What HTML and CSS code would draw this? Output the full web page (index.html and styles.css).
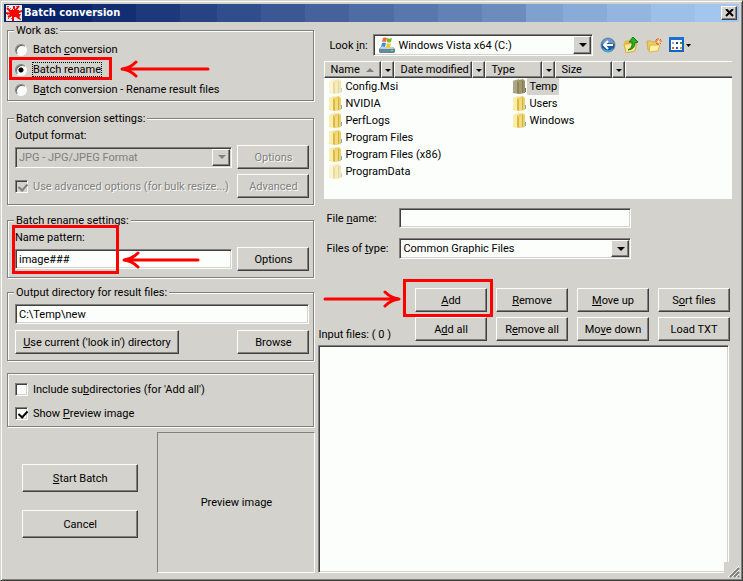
FILE: index.html
```
<!DOCTYPE html>
<html lang="en">
<head>
  <meta charset="utf-8">
  <title>Batch conversion</title>
  <link rel="stylesheet" href="styles.css">
</head>
<body>
<svg class="defs">
  <symbol id="folder" viewBox="0 0 14 16">
    <path d="M0 2l6-2v15l-6-1z" fill="#f4e28c"/>
    <path d="M6 1l4-1 2 2v12l-6 1z" fill="#ecd068"/>
    <path d="M0 2l4-1v13l-4-1z" fill="#f9eeae"/>
    <path d="M4 2l2 2v11l-2-1z" fill="#dcb846"/>
    <path d="M6 4l3-2v12l-3 1z" fill="#f2db7c"/>
    <path d="M9 2h1v12H9z" fill="#d6b03e"/>
    <path d="M12 9h1v4h-1z" fill="#6fb0d8"/>
  </symbol>
</svg>

<div class="window">
  <header class="titlebar">
    <svg class="logo" viewBox="0 0 16 16">
      <path d="M0 0h16v16H0z" fill="#ece8e6"/>
      <path d="M1 1h2v1H1zM4 3h1v1H4zM10 1h2v1h-2zM14 6h1v1h-1zM1 8h1v2H1zM13 9h2v1h-2zM5 13h1v1H5zM14 14h1v1h-1zM2 13h1v1H2z" fill="#7a6a68"/>
      <path d="M5 7L1 3M8 6V1M9 6l4-5M10 8l6-2M6 9L0 8M6 10l-4 2M7 10v6M9 10l5 4M10 9l4 2" stroke="#f00000" stroke-width="2" fill="none"/>
      <path d="M4 5h2V4h5v1h2v5h-2v2H6v-1H4z" fill="#f80000"/>
      <path d="M6 2h1v1H6zM7 4h1v1H7z" fill="#fff"/>
    </svg>
    <h1>Batch conversion</h1>
    <button class="close" aria-label="Close">
      <svg viewBox="0 0 9 8"><path d="M1 0l7 7M8 0L1 7" stroke="#000" stroke-width="2"/></svg>
    </button>
  </header>

  <main>
    <section class="left">
      <fieldset class="work">
        <legend>Work as:</legend>
        <label><input type="radio" name="work"><span>Batch <u>c</u>onversion</span></label>
        <label class="picked"><input type="radio" name="work" checked><span class="focus">Batch rename</span>
          <i class="mark mark-rename"></i>
          <svg class="arrow arrow-rename"><path d="M88 9H2M16 2Q10 8 2 9q8 1 14 7"/></svg>
        </label>
        <label><input type="radio" name="work"><span>B<u>a</u>tch conversion - Rename result files</span></label>
      </fieldset>

      <fieldset class="convert">
        <legend>Batch conversion settings:</legend>
        <label class="caption" for="format">Output format:</label>
        <div class="row">
          <div class="combo off grow">
            <select id="format" disabled><option>JPG - JPG/JPEG Format</option></select>
          </div>
          <button class="btn" disabled>Options</button>
        </div>
        <div class="row">
          <label class="grow off"><input type="checkbox" checked disabled><span>Use advanced options (for bulk resize...)</span></label>
          <button class="btn" disabled>Advanced</button>
        </div>
      </fieldset>

      <fieldset class="rename">
        <legend>Batch rename settings:</legend>
        <label class="caption" for="pattern">Name pattern:</label>
        <div class="row">
          <input class="field grow" id="pattern" type="text" value="image###">
          <button class="btn">Options</button>
        </div>
        <i class="mark mark-pattern"></i>
        <svg class="arrow arrow-pattern"><path d="M76 9H2M16 2Q10 8 2 9q8 1 14 7"/></svg>
      </fieldset>

      <fieldset class="output">
        <legend><label for="outdir">Output directory for result files:</label></legend>
        <input class="field" id="outdir" type="text" value="C:\Temp\new">
        <div class="row spread">
          <button class="btn wide"><u>U</u>se current ('look in') directory</button>
          <button class="btn">Browse</button>
        </div>
      </fieldset>

      <div class="options">
        <label><input type="checkbox"><span>Include su<u>b</u>directories (for 'Add all')</span></label>
        <label><input type="checkbox" checked><span>Show <u>P</u>review image</span></label>
      </div>

      <div class="bottom">
        <div class="actions">
          <button class="btn tall"><u>S</u>tart Batch</button>
          <button class="btn tall">Cancel</button>
        </div>
        <div class="preview">Preview image</div>
      </div>
    </section>

    <section class="right">
      <div class="browser">
        <div class="lookin">
          <label for="drive"><span>Look <u>i</u>n:</span></label>
          <div class="combo big">
            <svg class="drive" viewBox="0 0 16 16">
              <path d="M2 10h12l2 2v3l-1 1H1l-1-1v-3z" fill="#708088"/>
              <path d="M2 10h12l1 2H1z" fill="#c4d0d4"/>
              <path d="M1 13h14v2H1z" fill="#5b8fae"/>
              <path d="M12 13h2v1h-2z" fill="#5f5"/>
              <path d="M4 1q2-1 4 0L7 5Q5 4 3 5z" fill="#ee6a2c"/>
              <path d="M8 1q2 1 5 0l-1 4q-2 1-4 0z" fill="#7cba32"/>
              <path d="M3 6q2-1 4 0l-1 4q-2-1-4 0z" fill="#3a8fdc"/>
              <path d="M8 6q2 1 4 0l-1 4q-2 1-4 0z" fill="#f8c51e"/>
            </svg>
            <select id="drive"><option>Windows Vista x64 (C:)</option></select>
          </div>
          <div class="tools">
            <button aria-label="Back"><svg viewBox="0 0 16 16">
              <circle cx="8" cy="8" r="7" fill="#1f5a9c" stroke="#6f86a3"/>
              <path d="M2 7a6 6 0 0 1 12 0q-6-2-12 0z" fill="#6d98c6"/>
              <path d="M3 11q5 5 10 0-1 4-5 4t-5-4z" fill="#35b6ec"/>
              <path d="M13 8H5M8 4L4 8l4 4" fill="none" stroke="#fff" stroke-width="2"/>
            </svg></button>
            <button aria-label="Up one level"><svg viewBox="0 0 16 16">
              <path d="M1 4l4-1 1 1h7l-1 10-9 2z" fill="#e5bd45"/>
              <path d="M4 7l10-2-2 9-9 2-2-9z" fill="#fbe896" stroke="#d6ab3a"/>
              <path d="M5 13q5-2 4-8H6l4-5 5 5-3 1q0 6-7 7z" fill="#2fae2a" stroke="#137a16"/>
            </svg></button>
            <button aria-label="New folder"><svg viewBox="0 0 16 16">
              <path d="M1 4h4l1 1h6v8H2z" fill="#efcb62" stroke="#d6ab3a"/>
              <path d="M4 8h10l-2 6-9 1z" fill="#fdf0a8" stroke="#dcb548"/>
              <path d="M12 1v7M9 4h7M10 2l5 5M15 2l-5 5" stroke="#f0522c"/>
              <circle cx="12.500" cy="4.500" r="1.500" fill="#fff08a"/>
            </svg></button>
            <button class="views" aria-label="Views"><svg viewBox="0 0 22 16">
              <path d="M1 1h13v13H1z" fill="#fff" stroke="#1263c4" stroke-width="2"/>
              <path d="M0 0h15v3H0z" fill="#1571d8"/>
              <path d="M3 5h2v2H3z" fill="#9aa8c8"/><path d="M7 5h2v2H7z" fill="#27408c"/><path d="M11 5h2v2h-2z" fill="#2c9a2c"/>
              <path d="M3 10h2v2H3z" fill="#ef5a3a"/><path d="M7 10h2v2H7z" fill="#2a50c8"/><path d="M11 10h2v2h-2z" fill="#d8a018"/>
              <path d="M17 7h5l-2.500 3z" fill="#000"/>
            </svg></button>
          </div>
        </div>

        <div class="listview">
          <div class="columns">
            <button class="col sorted">Name</button><button class="drop" aria-label="Filter name"></button>
            <button class="col date">Date modified</button><button class="drop" aria-label="Filter date"></button>
            <button class="col">Type</button><button class="drop" aria-label="Filter type"></button>
            <button class="col">Size</button><button class="drop" aria-label="Filter size"></button>
            <span class="rest"></span>
          </div>
          <ul class="files">
            <li class="hidden"><svg><use href="#folder"/></svg><span>Config.Msi</span></li>
            <li><svg><use href="#folder"/></svg><span>NVIDIA</span></li>
            <li><svg><use href="#folder"/></svg><span>PerfLogs</span></li>
            <li><svg><use href="#folder"/></svg><span>Program Files</span></li>
            <li><svg><use href="#folder"/></svg><span>Program Files (x86)</span></li>
            <li class="hidden"><svg><use href="#folder"/></svg><span>ProgramData</span></li>
            <li class="selected"><svg><use href="#folder"/></svg><span>Temp</span></li>
            <li><svg><use href="#folder"/></svg><span>Users</span></li>
            <li><svg><use href="#folder"/></svg><span>Windows</span></li>
          </ul>
        </div>

        <div class="names">
          <label for="filename"><span>File <u>n</u>ame:</span></label>
          <input class="field" id="filename" type="text">
          <label for="filetype"><span>Files of <u>t</u>ype:</span></label>
          <div class="combo">
            <select id="filetype"><option>Common Graphic Files</option></select>
          </div>
        </div>
      </div>

      <div class="commands">
        <label for="input-files">Input files: ( 0 )</label>
        <div class="grid">
          <div class="add">
            <button class="btn"><u>A</u>dd</button>
            <i class="mark mark-add"></i>
            <svg class="arrow arrow-add"><path d="M2 9h74M62 2q6 6 14 7-8 1-14 7"/></svg>
          </div>
          <button class="btn"><u>R</u>emove</button>
          <button class="btn"><u>M</u>ove up</button>
          <button class="btn">S<u>o</u>rt files</button>
          <button class="btn">A<u>d</u>d all</button>
          <button class="btn">R<u>e</u>move all</button>
          <button class="btn">Mo<u>v</u>e down</button>
          <button class="btn">Load TXT</button>
        </div>
      </div>
      <select class="list" id="input-files" multiple></select>
    </section>
  </main>
  <svg class="grip" viewBox="0 0 16 16">
    <path d="M4 15L15 4M8 15l7-7M12 15l3-3" stroke="#fff"/>
    <path d="M6 15l9-9M10 15l5-5M14 15l1-1" stroke="#808080" stroke-width="2"/>
  </svg>
</div>
</body>
</html>
```
FILE: styles.css
```
* {
  box-sizing: border-box;
}
body {
  margin: 0;
  color: #000;
  background: #d4d2cc;
  font: 11px/13px Roboto, "Liberation Sans", sans-serif;
}
button, input, select {
  margin: 0;
  color: inherit;
  font: inherit;
}
.defs {
  display: none;
}

/* window frame */
.window {
  position: relative;
  display: flex;
  flex-direction: column;
  min-height: 100vh;
  padding: 3px;
  border: 1px solid #d4d2cc;
  border-right-color: #404040;
  border-bottom-color: #404040;
  box-shadow: inset 1px 1px #fcfefc, inset -1px -1px #808080;
}
.titlebar {
  display: flex;
  align-items: center;
  height: 18px;
  padding: 0 2px;
  color: #fff;
  background: linear-gradient(90deg,
    #0a246a 0 12%, #142e72 0 18%, #1e397b 0 24%, #274383 0 29%,
    #314e8c 0 35%, #3b5894 0 41%, #45629c 0 47%, #4e6da5 0 53%,
    #5877ad 0 59%, #6281b5 0 65%, #6c8cbe 0 71%, #7fa1cf 0 76%,
    #89abd7 0 82%, #93b5df 0 88%, #9cc0e8 0 94%, #a2c6ee 0);
}
.titlebar h1 {
  flex: 1;
  margin: 0 2px;
  font: bold 11px/16px "DejaVu Sans Condensed", "DejaVu Sans", sans-serif;
}
.logo {
  width: 16px;
  height: 16px;
}
.close {
  display: flex;
  align-items: center;
  justify-content: center;
  width: 16px;
  height: 14px;
  padding: 0;
  background: #d4d2cc;
  border: 1px solid;
  border-color: #fcfefc #404040 #404040 #fcfefc;
  box-shadow: inset -1px -1px #808080;
}
.close svg {
  width: 9px;
  height: 8px;
}
main {
  flex: 1;
  display: grid;
  grid-template-columns: minmax(0, 307fr) minmax(0, 413fr);
  gap: 4px;
  padding: 2px 7px 4px 3px;
}
.left, .right {
  display: flex;
  flex-direction: column;
}

/* groups */
fieldset, .options {
  position: relative;
  min-width: 0;
  margin: 0;
  padding: 0 4px 6px 7px;
  border: 1px solid #808080;
  box-shadow: 1px 1px #fcfefc, inset 1px 1px #fcfefc;
}
legend {
  padding: 0 2px;
  margin-left: -1px;
  background: #d4d2cc;
}
.work {
  height: 77px;
  padding-top: 3px;
}
label {
  display: flex;
  align-items: center;
}
.work label {
  height: 19px;
}
.work label + label {
  margin-top: 1px;
}
.picked {
  position: relative;
}
.focus {
  outline: 1px dotted #000;
}
.convert {
  margin-top: 11px;
}
.rename {
  margin-top: 9px;
}
.output {
  margin-top: 8px;
}
.caption {
  height: 13px;
  margin: 4px 0 3px;
}
.row {
  display: flex;
  align-items: center;
  gap: 5px;
}
.row + .row {
  margin-top: 5px;
}
.grow {
  flex: 1;
}
.spread {
  justify-content: space-between;
  margin-top: 6px;
}
.output .field {
  width: 100%;
  margin-top: 5px;
}
.options {
  margin-top: 12px;
  padding: 3px 7px 1px;
}
.options label {
  height: 24px;
}

/* controls */
.btn {
  width: 72px;
  height: 24px;
  padding: 0;
  background: #d4d2cc;
  border: 1px solid;
  border-color: #fcfefc #404040 #404040 #fcfefc;
  box-shadow: inset -1px -1px #808080;
  white-space: nowrap;
}
.btn:disabled, .off {
  color: #808080;
  text-shadow: 1px 1px #fcfefc;
}
.wide {
  width: 164px;
}
.tall {
  width: 116px;
  height: 28px;
}
.field, .combo, .list, input[type=checkbox] {
  background: #fcfefc;
  border: 1px solid;
  border-color: #808080 #fcfefc #fcfefc #808080;
  border-radius: 0;
  box-shadow: inset 1px 1px #404040, inset -1px -1px #d4d2cc;
}
.field {
  display: block;
  min-width: 0;
  height: 20px;
  padding: 0 3px;
}
.combo {
  position: relative;
  display: flex;
  height: 21px;
}
.combo select {
  flex: 1;
  min-width: 0;
  padding: 0 20px 0 3px;
  appearance: none;
  background: none;
  border: 0;
  opacity: 1;
}
.combo::before {
  content: "";
  position: absolute;
  inset: 1px 1px 1px auto;
  width: 16px;
  background: #d4d2cc;
  border: 1px solid;
  border-color: #fcfefc #404040 #404040 #fcfefc;
  box-shadow: inset -1px -1px #808080;
  pointer-events: none;
}
.combo::after {
  content: "";
  position: absolute;
  top: calc(50% - 2px);
  right: 5px;
  border: 4px solid transparent;
  border-top-color: #000;
  border-bottom: 0;
  pointer-events: none;
}
.combo.off {
  background: #d4d2cc;
  text-shadow: none;
}
.combo.off::after {
  border-top-color: #808080;
}
input[type=checkbox], input[type=radio] {
  flex: none;
  appearance: none;
  width: 13px;
  height: 13px;
  margin-right: 5px;
}
input[type=radio] {
  width: 12px;
  height: 12px;
  margin-right: 6px;
  background: #fcfefc;
  border: 1px solid;
  border-color: #808080 #fcfefc #fcfefc #808080;
  border-radius: 50%;
  box-shadow: inset 1px 1px #606060;
}
input[type=radio]:checked {
  background: radial-gradient(circle, #000 2px, #fcfefc 3px);
}
input[type=checkbox]:checked::after {
  content: "";
  display: block;
  width: 4px;
  height: 7px;
  margin: 1px 0 0 4px;
  border: solid #000;
  border-width: 0 2px 2px 0;
  transform: rotate(42deg);
}
input[type=checkbox]:disabled {
  background: #d4d2cc;
}
input[type=checkbox]:disabled::after {
  border-color: #808080;
}

.bottom {
  flex: 1;
  display: flex;
  margin-top: 5px;
}
.actions {
  flex: 1;
  display: flex;
  flex-direction: column;
  align-items: center;
  gap: 18px;
  padding: 32px 4px 0 0;
}
.preview {
  flex: 0 0 158px;
  display: flex;
  align-items: center;
  justify-content: center;
  margin-right: -1px;
  border: 1px solid;
  border-color: #808080 #fcfefc #fcfefc #808080;
}

/* file browser */
.browser {
  margin: 10px 0 0 6px;
}
.lookin {
  display: flex;
  align-items: center;
}
.lookin label {
  width: 49px;
  padding-left: 5px;
}
.big {
  flex: 0 1 220px;
  height: 22px;
}
.big select {
  padding-left: 24px;
}
.drive {
  position: absolute;
  top: 2px;
  left: 5px;
  width: 16px;
  height: 16px;
}
.tools {
  display: flex;
  gap: 7px;
  margin-left: 7px;
}
.tools button {
  padding: 0;
  background: none;
  border: 0;
}
.tools svg {
  display: block;
  width: 16px;
  height: 16px;
}
.tools .views svg {
  width: 22px;
}
.listview {
  height: 138px;
  margin-top: 5px;
  background: #fcfefc;
}
.columns {
  display: flex;
  height: 17px;
}
.columns > * {
  position: relative;
  padding: 0 0 0 5px;
  background: #d4d2cc;
  border: 1px solid;
  border-color: #fcfefc #404040 #404040 #fcfefc;
  box-shadow: inset -1px -1px #808080;
  text-align: left;
  line-height: 14px;
  white-space: nowrap;
}
.col {
  width: 57px;
}
.col.date {
  width: 78px;
}
.drop {
  width: 13px;
}
.drop::after, .sorted::after {
  content: "";
  position: absolute;
  top: 7px;
  left: 3px;
  border: 3px solid transparent;
  border-top-color: #000;
  border-bottom: 0;
}
.sorted::after {
  top: 6px;
  left: 41px;
  border: 4px solid transparent;
  border-top: 0;
  border-bottom-color: #808080;
}
.columns .rest {
  flex: 1;
  border-right: 0;
  box-shadow: inset 0 -1px #808080;
}
.files {
  display: grid;
  grid-template-rows: repeat(6, 17px);
  grid-auto-flow: column;
  grid-auto-columns: 184px;
  margin: 0;
  padding: 0 0 0 5px;
  list-style: none;
}
.files li {
  display: flex;
  align-items: center;
}
.files svg {
  width: 14px;
  height: 16px;
}
.files span {
  padding: 2px;
}
.hidden svg {
  opacity: .5;
}
.selected svg {
  filter: brightness(.7) saturate(.6);
}
.selected span {
  background: #d4d2cc;
}
.names {
  display: grid;
  grid-template-columns: 73px minmax(0, 232px);
  row-gap: 10px;
  align-items: center;
  margin: 9px 0 0 2px;
}

/* input files */
.commands {
  display: flex;
  align-items: flex-end;
  justify-content: space-between;
  margin: 29px 2px 0 0;
}
.grid {
  display: grid;
  grid-template-columns: repeat(4, 72px);
  gap: 5px 9px;
}
.list {
  flex: 1;
  min-height: 80px;
  margin: 4px 3px 0 0;
  outline: 0;
}
.grip {
  position: absolute;
  right: 2px;
  bottom: 2px;
  width: 16px;
  height: 16px;
  background: #d4d2cc;
}

/* red marks */
.mark {
  position: absolute;
  border: 3px solid #f00;
  pointer-events: none;
}
.arrow {
  position: absolute;
  width: 90px;
  height: 18px;
  fill: none;
  stroke: #f00;
  stroke-width: 3px;
  stroke-linecap: round;
  pointer-events: none;
}
.add {
  position: relative;
}
.mark-rename {
  inset: -3px auto -1px -6px;
  width: 103px;
}
.arrow-rename {
  top: 0;
  left: 105px;
}
.mark-pattern {
  left: 4px;
  bottom: 3px;
  width: 107px;
  height: 49px;
}
.arrow-pattern {
  left: 114px;
  bottom: 8px;
}
.mark-add {
  inset: -9px -6px -5px -12px;
}
.arrow-add {
  top: 2px;
  left: -92px;
}
```
